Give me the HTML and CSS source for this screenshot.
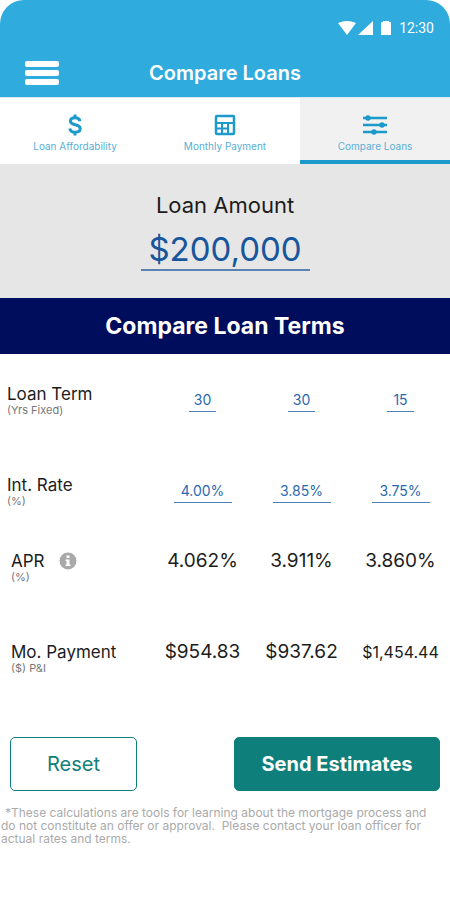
FILE: index.html
```html
<!DOCTYPE html>
<html lang="en">
<head>
    <meta charset="UTF-8">
    <meta name="viewport" content="width=device-width, initial-scale=1.0">
    <title>Compare Loans</title>
    <link rel="stylesheet" href="styles.css">
</head>
<body>
    <header class="app-header">
        <div class="status-bar">
            <svg class="status-icons" width="54" height="16" viewBox="0 0 54 16" fill="currentColor" aria-hidden="true">
                <path d="M0 3Q9 -1 18 3L9 15Z"/>
                <path d="M35 1V15H20Z"/>
                <path d="M45 1H51V2H52Q53 2 53 3V15H43V3Q43 2 45 2Z"/>
            </svg>
            <span class="clock">12:30</span>
        </div>
        <div class="title-bar">
            <button class="menu-button" type="button" aria-label="Menu">
                <span class="menu-line"></span>
                <span class="menu-line"></span>
                <span class="menu-line"></span>
            </button>
            <h1 class="page-title">Compare Loans</h1>
        </div>
    </header>

    <nav class="tabs">
        <a href="#affordability" class="tab">
            <svg width="24" height="24" viewBox="0 0 24 24" fill="none" stroke="currentColor" stroke-width="3" aria-hidden="true">
                <path d="M17 8.200C16.500 5.800 14.600 4.800 12 4.800C9.200 4.800 7.400 6.200 7.400 8.300C7.400 13 17.200 10.300 17.200 15.500C17.200 17.900 15 19.200 12.200 19.200C9.200 19.200 7.200 17.900 6.800 15.400M12 1.500V5M12 19V22.500"/>
            </svg>
            <span>Loan Affordability</span>
        </a>
        <a href="#payment" class="tab">
            <svg width="24" height="24" viewBox="0 0 24 24" fill="none" stroke="currentColor" stroke-width="2" aria-hidden="true">
                <rect x="3" y="3" width="18" height="18" rx="1" stroke-width="2.500"/>
                <path d="M3 10H21M3 15.500H15M9 10V21M15 10V21"/>
            </svg>
            <span>Monthly Payment</span>
        </a>
        <a href="#compare" class="tab active" aria-current="page">
            <svg width="26" height="24" viewBox="0 0 26 24" fill="none" stroke="currentColor" stroke-width="2.500" aria-hidden="true">
                <path d="M1 5H25M1 12H25M1 19H25"/>
                <g fill="currentColor" stroke="none">
                    <circle cx="6" cy="5" r="2.700"/>
                    <circle cx="20" cy="12" r="2.700"/>
                    <circle cx="12" cy="19" r="2.700"/>
                </g>
            </svg>
            <span>Compare Loans</span>
        </a>
    </nav>

    <main>
        <section class="amount">
            <label for="loanAmount" class="amount-label">Loan Amount</label>
            <input id="loanAmount" class="amount-input" type="text" value="$200,000">
        </section>

        <h2 class="banner">Compare Loan Terms</h2>

        <table class="terms">
            <tbody>
                <tr class="term-row">
                    <th scope="row">Loan Term<small>(Yrs Fixed)</small></th>
                    <td><input class="term-input short" type="text" value="30" aria-label="Loan 1 term in years"></td>
                    <td><input class="term-input short" type="text" value="30" aria-label="Loan 2 term in years"></td>
                    <td><input class="term-input short" type="text" value="15" aria-label="Loan 3 term in years"></td>
                </tr>
                <tr class="rate-row">
                    <th scope="row">Int. Rate<small>(%)</small></th>
                    <td><input class="term-input" type="text" value="4.00%" aria-label="Loan 1 interest rate"></td>
                    <td><input class="term-input" type="text" value="3.85%" aria-label="Loan 2 interest rate"></td>
                    <td><input class="term-input" type="text" value="3.75%" aria-label="Loan 3 interest rate"></td>
                </tr>
                <tr class="result-row">
                    <th scope="row">
                        <span class="label-line">
                            APR
                            <button class="info-button" type="button" aria-label="About APR">
                                <svg width="18" height="18" viewBox="0 0 18 18" aria-hidden="true">
                                    <circle cx="9" cy="9" r="8.500" fill="#a9a9a9"/>
                                    <path d="M7.500 3.500H10.500V6H7.500ZM6.500 7.500H10.500V12.500H11.500V14H6.500V12.500H7.500V9H6.500Z" fill="#fff"/>
                                </svg>
                            </button>
                        </span>
                        <small>(%)</small>
                    </th>
                    <td>4.062%</td>
                    <td>3.911%</td>
                    <td>3.860%</td>
                </tr>
                <tr class="result-row">
                    <th scope="row">Mo. Payment<small>($) P&amp;I</small></th>
                    <td>$954.83</td>
                    <td>$937.62</td>
                    <td class="long-value">$1,454.44</td>
                </tr>
            </tbody>
        </table>

        <div class="actions">
            <button class="button reset-button" type="button">Reset</button>
            <button class="button send-button" type="button">Send Estimates</button>
        </div>

        <p class="disclaimer">*These calculations are tools for learning about the mortgage process and do not constitute an offer or approval.&nbsp; Please contact your loan officer for actual rates and terms.</p>
    </main>
</body>
</html>
```

FILE: styles.css
```css
* {
    margin: 0;
    padding: 0;
    box-sizing: border-box;
}

body {
    font-family: Inter, Roboto, sans-serif;
    background: #fff;
    color: #1c1c1c;
}

button,
input {
    font-family: inherit;
    border: none;
    background: none;
}

button {
    cursor: pointer;
}

/* Header */
.app-header {
    background: #2fabdd;
    color: #fff;
    border-radius: 24px 24px 0 0;
    padding: 16px 16px 0;
}

.status-bar {
    display: flex;
    justify-content: flex-end;
    align-items: center;
    gap: 7px;
    height: 24px;
}

.clock {
    font-family: Roboto, sans-serif;
    font-size: 14px;
}

.title-bar {
    display: grid;
    grid-template-columns: 50px 1fr 50px;
    align-items: center;
    height: 57px;
    padding-top: 9px;
}

.menu-button {
    display: flex;
    flex-direction: column;
    gap: 3px;
    width: 34px;
    margin-left: 9px;
}

.menu-line {
    height: 6px;
    border-radius: 2px;
    background: #fff;
}

.page-title {
    font-size: 20px;
    font-weight: 600;
    text-align: center;
}

/* Tabs */
.tabs {
    display: grid;
    grid-template-columns: repeat(3, 1fr);
    border-top: 1px solid #d6edf7;
}

.tab {
    display: flex;
    flex-direction: column;
    align-items: center;
    gap: 3px;
    height: 66px;
    padding-top: 15px;
    border-bottom: 4px solid transparent;
    color: #1c9acb;
    font-size: 10px;
    line-height: 12px;
    text-decoration: none;
}

.tab span {
    color: #5aaed3;
}

.tab.active {
    background: #f1f1f1;
    border-bottom-color: #1c9acb;
}

/* Loan amount */
.amount {
    display: flex;
    flex-direction: column;
    align-items: center;
    background: #e6e6e6;
    padding: 26px 16px 27px;
}

.amount-label {
    font-size: 22px;
    line-height: 30px;
}

.amount-input {
    width: 169px;
    height: 51px;
    padding-top: 8px;
    border-bottom: 2px solid #5b82b5;
    color: #17559c;
    font-size: 33px;
    text-align: center;
}

.banner {
    background: #000c5c;
    color: #fff;
    font-size: 23px;
    font-weight: 700;
    line-height: 56px;
    text-align: center;
}

/* Comparison table */
.terms {
    width: 100%;
    table-layout: fixed;
    border-collapse: collapse;
}

.terms th {
    width: 34%;
    padding: 30px 0 0 7px;
    font-size: 17px;
    font-weight: 400;
    line-height: 20px;
    text-align: left;
    vertical-align: top;
}

.terms td {
    padding-top: 30px;
    font-size: 19px;
    line-height: 20px;
    text-align: center;
    vertical-align: top;
}

.terms .result-row th {
    padding-left: 11px;
}

.terms .long-value {
    font-size: 16px;
}

.terms small {
    display: block;
    color: #777;
    font-size: 11px;
    line-height: 13px;
}

.term-row,
.result-row {
    height: 91px;
}

.rate-row {
    height: 76px;
}

.term-input {
    display: block;
    width: 58px;
    height: 28px;
    margin: 0 auto;
    padding-top: 4px;
    border-bottom: 1px solid #4f7fb8;
    color: #2b69ae;
    font-size: 14px;
    text-align: center;
}

.term-input.short {
    width: 27px;
}

.label-line {
    display: flex;
    align-items: center;
    gap: 14px;
}

.info-button {
    display: flex;
}

/* Actions */
.actions {
    display: flex;
    justify-content: space-between;
    padding: 34px 10px 0;
}

.button {
    height: 54px;
    border: 1px solid #0f7f7b;
    border-radius: 5px;
    font-size: 20px;
}

.reset-button {
    width: 127px;
    color: #0f7f7b;
}

.send-button {
    width: 206px;
    background: #0f7f7b;
    color: #fff;
    font-weight: 700;
}

.disclaimer {
    padding: 15px 12px 0 1px;
    color: #aaa;
    font-size: 12px;
    line-height: 13px;
    text-indent: 4px;
}
```
